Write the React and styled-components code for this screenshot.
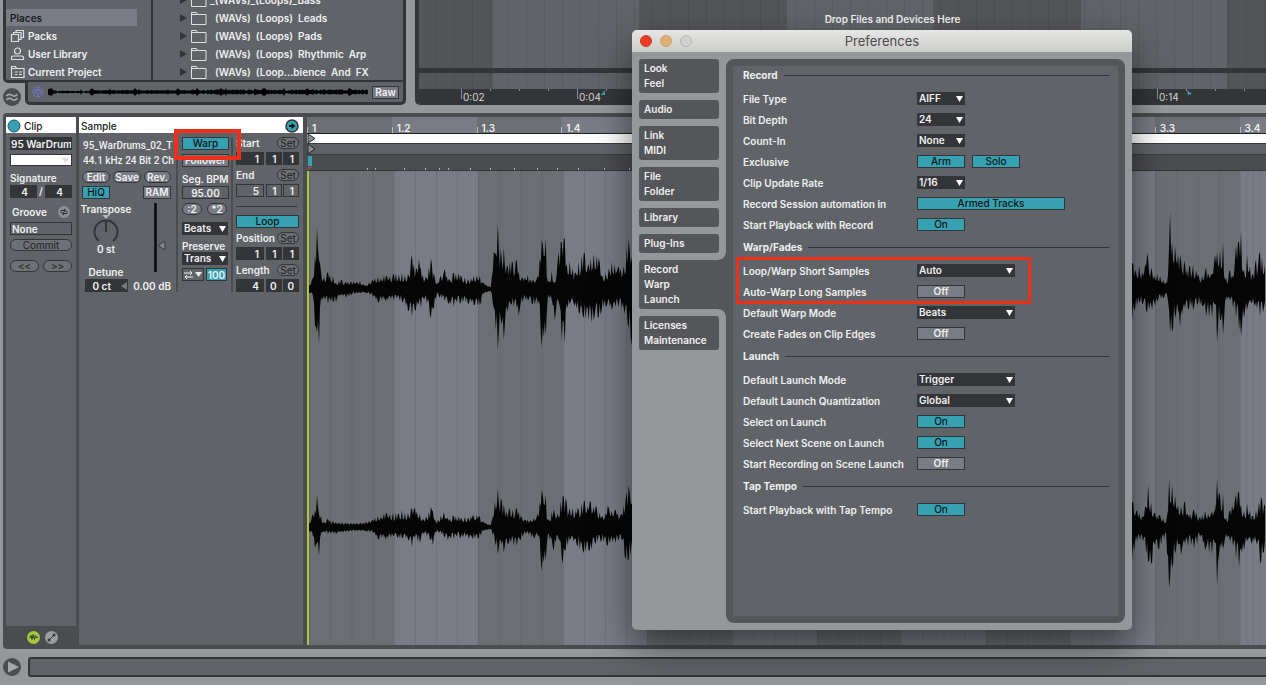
import { useState } from "react";
import styled, { createGlobalStyle, css } from "styled-components";

const TEAL = "#36a1b1";
const DARK = "#333539";
const FRAME = "#4b4c4f";
const PANEL = "#606468";
const CHROME = "#94989b";
const LIGHT = "#797c85";
const TEXT = "#f0f0f0";

const PLACES = [
  { label: "Packs", icon: "packs" },
  { label: "User Library", icon: "user" },
  { label: "Current Project", icon: "project" },
];

const FOLDERS = [
  "_(WAVs)_(Loops)_Bass",
  "(WAVs)  (Loops)  Leads",
  "(WAVs)  (Loops)  Pads",
  "(WAVs)  (Loops)  Rhythmic  Arp",
  "(WAVs)  (Loop...bience  And  FX",
];

const TIMES = ["0:02", "0:04", "0:06", "0:08", "0:10", "0:12", "0:14"];

const BEATS = ["1", "1.2", "1.3", "1.4", "2", "2.2", "2.3", "2.4", "3", "3.2", "3.3", "3.4"];

const TABS = [
  ["Look", "Feel"],
  ["Audio"],
  ["Link", "MIDI"],
  ["File", "Folder"],
  ["Library"],
  ["Plug-Ins"],
  ["Record", "Warp", "Launch"],
  ["Licenses", "Maintenance"],
];

// peaks: [x, above, below]
const LEFT_CHANNEL = [
  [0, 3, 3], [4, 10, 6], [6, 32, 36], [8, 60, 42], [10, 28, 54], [11, 24, 18], [14, 8, 8], [19, 16, 14], [24, 12, 12],
  [27, 5, 12], [32, 8, 5], [37, 6, 8], [42, 7, 5], [51, 7, 3], [57, 3, 3], [64, 8, 7], [69, 11, 12], [77, 12, 11],
  [85, 13, 10], [93, 15, 11], [99, 14, 20], [103, 33, 27], [107, 18, 20], [110, 29, 12], [112, 19, 18], [116, 8, 8],
  [122, 30, 28], [125, 15, 18], [128, 4, 4], [131, 10, 8], [136, 19, 11], [140, 9, 14], [145, 15, 17], [152, 13, 12],
  [159, 9, 13], [165, 12, 15], [171, 12, 15], [175, 5, 4], [182, 1, 1], [185, 36, 18], [187, 34, 40], [189, 65, 60],
  [192, 40, 30], [195, 40, 50], [199, 22, 22], [203, 26, 14], [208, 28, 18], [210, 16, 26], [214, 10, 12],
  [219, 13, 10], [224, 8, 14], [229, 12, 14], [233, 48, 57], [237, 50, 45], [239, 6, 8], [243, 17, 10], [246, 5, 30],
  [250, 36, 12], [253, 46, 50], [256, 50, 54], [259, 14, 18], [261, 27, 14], [266, 15, 16], [270, 26, 22],
  [275, 35, 28], [280, 24, 30], [285, 34, 30], [290, 30, 28], [293, 12, 20], [297, 15, 16], [303, 26, 20],
  [310, 22, 17], [315, 22, 18], [320, 50, 38], [323, 30, 56], [330, 44, 50], [360, 16, 18], [420, 20, 20],
  [440, 55, 48], [480, 24, 24], [540, 48, 40], [600, 18, 20], [660, 40, 42], [720, 20, 18], [790, 34, 30],
  [824, 25, 28], [827, 18, 18], [831, 22, 12], [834, 16, 14], [839, 35, 22], [844, 16, 20], [849, 14, 11],
  [855, 8, 8], [859, 5, 5], [862, 76, 43], [864, 46, 42], [867, 42, 28], [870, 34, 20], [872, 33, 37], [877, 23, 18],
  [881, 22, 18], [885, 23, 20], [890, 14, 13], [894, 12, 16], [898, 21, 27], [904, 14, 27], [907, 33, 15],
  [909, 36, 52], [912, 38, 30], [915, 46, 44], [917, 8, 12], [922, 18, 10], [925, 10, 18], [928, 42, 28],
  [931, 45, 40], [933, 57, 46], [936, 18, 28], [939, 33, 20], [944, 13, 13], [947, 24, 16], [952, 36, 26],
  [958, 20, 24],
];

const RIGHT_CHANNEL = [
  [0, 3, 3], [4, 12, 8], [6, 16, 20], [8, 31, 15], [10, 12, 28], [12, 10, 5], [14, 3, 4], [19, 7, 6], [27, 4, 6],
  [37, 3, 4], [52, 3, 3], [64, 6, 5], [69, 10, 11], [77, 13, 11], [89, 12, 10], [93, 16, 10], [99, 13, 11],
  [103, 18, 19], [106, 18, 10], [111, 12, 15], [115, 6, 6], [122, 19, 12], [124, 15, 17], [127, 4, 4], [135, 14, 8],
  [139, 8, 12], [145, 10, 11], [152, 8, 9], [164, 11, 11], [170, 10, 10], [175, 4, 3], [182, 1, 1], [186, 24, 12],
  [189, 37, 26], [193, 25, 16], [195, 22, 24], [200, 16, 15], [208, 18, 18], [212, 10, 12], [217, 6, 6],
  [225, 8, 10], [229, 12, 8], [233, 36, 43], [237, 31, 32], [239, 6, 7], [245, 17, 23], [249, 12, 8], [254, 30, 36],
  [257, 28, 22], [261, 18, 12], [269, 18, 18], [275, 24, 25], [281, 24, 22], [287, 20, 16], [293, 9, 12],
  [299, 20, 18], [307, 16, 15], [313, 12, 12], [317, 27, 31], [320, 41, 32], [324, 28, 27], [360, 16, 18],
  [440, 38, 40], [500, 16, 16], [560, 34, 30], [640, 15, 17], [700, 30, 36], [780, 16, 16], [824, 24, 31],
  [829, 16, 13], [835, 9, 13], [840, 42, 34], [843, 24, 36], [847, 13, 17], [851, 11, 22], [858, 4, 6],
  [861, 47, 60], [864, 41, 40], [867, 30, 26], [870, 21, 16], [873, 20, 27], [877, 23, 16], [880, 11, 18],
  [886, 16, 21], [892, 9, 9], [897, 15, 22], [904, 14, 26], [907, 16, 15], [909, 47, 57], [911, 33, 26],
  [915, 31, 21], [917, 6, 10], [922, 16, 13], [928, 31, 30], [931, 33, 39], [936, 15, 22], [939, 23, 13],
  [944, 10, 16], [948, 16, 13], [953, 29, 36], [956, 20, 24], [958, 22, 24],
];

function noise(n) {
  const s = Math.sin(n * 127.1) * 43758.5453;
  return s - Math.floor(s);
}

function wavePath(peaks, base) {
  const top = [];
  const bottom = [];
  for (let i = 0; i < peaks.length - 1; i++) {
    const [x0, u0, d0] = peaks[i];
    const [x1, u1, d1] = peaks[i + 1];
    for (let x = x0; x < x1; x++) {
      const t = (x - x0) / (x1 - x0);
      const ku = x === x0 ? 1 : x % 3 ? 0.4 + noise(x) * 0.3 : 0.8 + noise(x) * 0.3;
      const kd = x === x0 ? 1 : x % 3 === 1 ? 0.8 + noise(x + 9) * 0.3 : 0.4 + noise(x + 9) * 0.3;
      top.push(`${x} ${(base - 1 - (u0 + (u1 - u0) * t) * ku).toFixed(1)}`);
      bottom.push(`${x} ${(base + 1 + (d0 + (d1 - d0) * t) * kd).toFixed(1)}`);
    }
  }
  return `M${top.join("L")}L${bottom.reverse().join("L")}Z`;
}

function previewPath() {
  const top = [];
  const bottom = [];
  for (let x = 0; x <= 320; x++) {
    const hit = x % 43 < 3 || x % 29 === 4 || x < 4;
    const a = (x > 8 && x < 42 ? 0.6 : 1.2) + noise(x) * (x > 140 ? 1.6 : 1) + (hit ? 1.6 : 0);
    top.push(`${x} ${(6 - a).toFixed(1)}`);
    bottom.push(`${x} ${(6 + a).toFixed(1)}`);
  }
  return `M${top.join("L")}L${bottom.reverse().join("L")}Z`;
}

function PlaceIcon({ kind }) {
  return (
    <svg width="16" height="14" viewBox="0 0 16 14" fill="none" stroke="#e0e0e0" strokeWidth="1.2">
      {kind === "packs" && <path d="M1.5 5.5h7v7h-7zM3.5 5V3.500h7.500v7H9M6 3V1.500h7.500v7H11.500" />}
      {kind === "user" && (
        <>
          <circle cx="7.500" cy="4" r="3" />
          <path d="M1.500 12.500v-2.500l1.500-1h9l1.500 1v2.500z" />
        </>
      )}
      {kind === "project" && (
        <path d="M1.500 12.500v-11h4l1 2h7.500v9zM1.500 3.500h5M5 7h2.500M9 7h3M5 9.500h2.500M9 9.500h3" />
      )}
    </svg>
  );
}

function Dropdown({ label, value, wide, id, size = "pref" }) {
  return (
    <SelectBox $wide={wide} $size={size}>
      <Select id={id} aria-label={label} defaultValue={value}>
        <option>{value}</option>
      </Select>
      <svg width="7" height="6" viewBox="0 0 7 6" fill="#fff">
        <path d="M0 0h7L3.500 6z" />
      </svg>
    </SelectBox>
  );
}

function Switch({ on, id, width = 48 }) {
  const [active, setActive] = useState(on);
  return (
    <Toggle id={id} $on={active} $width={width} onClick={() => setActive(!active)}>
      {active ? "On" : "Off"}
    </Toggle>
  );
}

function Position({ label, values, dark }) {
  return (
    <Locator>
      <LocatorHead>
        <span>{label}</span>
        <Pill $width={22} $ink>Set</Pill>
      </LocatorHead>
      <Numbers>
        {values.map((v, i) => (
          <NumberBox key={i} $dark={dark} defaultValue={v} aria-label={`${label} ${i + 1}`} />
        ))}
      </Numbers>
    </Locator>
  );
}

function Browser() {
  return (
    <BrowserColumn>
      <BrowserPanel>
        <Places>
          <PlacesTitle>Places</PlacesTitle>
          {PLACES.map((p) => (
            <PlaceRow key={p.label} href="#">
              <PlaceIcon kind={p.icon} />
              {p.label}
            </PlaceRow>
          ))}
        </Places>
        <Folders>
          {FOLDERS.map((name, i) => (
            <FolderRow key={name} $flush={i === 0}>
              <svg width="7" height="8" viewBox="0 0 7 8" fill={DARK}>
                <path d="M0 0l7 4-7 4z" />
              </svg>
              <svg width="16" height="13" viewBox="0 0 16 13" fill="none" stroke="#e0e0e0">
                <path d="M.5 12.500v-12h5l1 2h8.500v10zM.5 2.500h6" />
              </svg>
              <span>{name}</span>
            </FolderRow>
          ))}
        </Folders>
      </BrowserPanel>
      <PreviewRow>
        <HotSwap width="18" height="18" viewBox="0 0 18 18">
          <circle cx="9" cy="9" r="9" fill={FRAME} />
          <path
            d="M3.500 8c1.800-2.500 3.500-2 5.500-.700s3.700 1.300 5.500-1M3.500 12c1.800-2.500 3.500-2 5.500-.700s3.700 1.300 5.500-1"
            fill="none"
            stroke="#a4a8ab"
            strokeWidth="1.600"
          />
        </HotSwap>
        <Preview>
          <svg width="12" height="12" viewBox="0 0 12 12" fill="none" stroke="#7674c8">
            <circle cx="6" cy="6" r="5" />
            <path d="M3.500 7.500V6a2.500 2.500 0 0 1 5 0v1.500M6 6v5" strokeWidth="1.300" />
          </svg>
          <PreviewWave viewBox="0 0 320 12" preserveAspectRatio="none">
            <path d={previewPath()} fill="#060606" />
          </PreviewWave>
          <RawButton>Raw</RawButton>
        </Preview>
      </PreviewRow>
    </BrowserColumn>
  );
}

function Arrangement() {
  return (
    <ArrangementPanel>
      <Tracks>
        <DropHint>Drop Files and Devices Here</DropHint>
      </Tracks>
      <TrackDivider />
      <TrackFoot />
      <TimeRuler>
        {TIMES.map((t) => (
          <TimeMark key={t}>
            <span>{t}</span>
            {(t === "0:04" || t === "0:14") && (
              <CueMark $far={t === "0:14"} width="5" height="5" viewBox="0 0 5 5" fill={TEAL}>
                <path d={t === "0:04" ? "M4 0v5H0z" : "M0 0l5 4-4 1z"} />
              </CueMark>
            )}
          </TimeMark>
        ))}
      </TimeRuler>
    </ArrangementPanel>
  );
}

function ClipBox() {
  return (
    <ClipColumn>
      <ClipBody>
        <BoxTitle>
          <svg width="14" height="14" viewBox="0 0 14 14">
            <circle cx="7" cy="7" r="6" fill={TEAL} stroke="#23525b" />
          </svg>
          Clip
        </BoxTitle>
        <ClipFields>
          <ClipName defaultValue="95 WarDrum" aria-label="Clip name" />
          <ColorPicker aria-label="Clip color">
            <svg width="7" height="5" viewBox="0 0 7 5" fill="#ddd">
              <path d="M0 0h7L3.500 5z" />
            </svg>
          </ColorPicker>
          <FieldLabel $gap={6}>Signature</FieldLabel>
          <SignatureRow>
            <NumberBox $dark defaultValue="4" aria-label="Beats" />
            <span>/</span>
            <NumberBox $dark defaultValue="4" aria-label="Beat unit" />
          </SignatureRow>
          <GrooveRow>
            Groove
            <svg width="12" height="12" viewBox="0 0 12 12">
              <circle cx="6" cy="6" r="6" fill="#8a8d91" />
              <path d="M3 7V4.500h4M9 5v2.500H5M6 3l2 1.500L6 6M6 6L4 7.500 6 9" fill="none" stroke={DARK} />
            </svg>
          </GrooveRow>
          <GrooveField defaultValue="None" aria-label="Groove" />
          <Pill $ink $fill>Commit</Pill>
          <NudgeRow>
            <Pill $ink>&lt;&lt;</Pill>
            <Pill $ink>&gt;&gt;</Pill>
          </NudgeRow>
        </ClipFields>
      </ClipBody>
      <ClipFoot>
        <svg width="13" height="13" viewBox="0 0 13 13">
          <circle cx="6.500" cy="6.500" r="6.500" fill="#a6c93c" />
          <path d="M2 6.500h1l1-2 1 4 1.200-5 1.300 5 1-4 1 2h1.500" fill="none" stroke={DARK} />
        </svg>
        <svg width="13" height="13" viewBox="0 0 13 13">
          <circle cx="6.500" cy="6.500" r="6.500" fill="#9b9ea2" />
          <path d="M4 9l5-5" stroke={DARK} />
          <circle cx="4" cy="9" r="1.500" fill={DARK} />
          <circle cx="9" cy="4" r="1.500" fill={DARK} />
        </svg>
      </ClipFoot>
    </ClipColumn>
  );
}

function SampleBox() {
  return (
    <SampleColumn>
      <BoxTitle $spread>
        Sample
        <svg width="14" height="14" viewBox="0 0 14 14">
          <circle cx="7" cy="7" r="6" fill={TEAL} stroke={DARK} strokeWidth="1.500" />
          <path d="M4 6h2.500V4L10.500 7 6.500 10V8H4z" fill="#111" />
        </svg>
      </BoxTitle>
      <SampleBody>
        <SampleInfo>
          <Clipped>95_WarDrums_02_T</Clipped>
          <Clipped>44.1 kHz 24 Bit 2 Ch</Clipped>
          <Spread $gap={3}>
            <Pill $width={28}>Edit</Pill>
            <Pill $width={28}>Save</Pill>
            <Pill $width={27}>Rev.</Pill>
          </Spread>
          <Spread $gap={3}>
            <Toggle $on $width={28}>HiQ</Toggle>
            <Toggle $width={28}>RAM</Toggle>
          </Spread>
          <TuneRow>
            <TuneColumn>
              <span>Transpose</span>
              <svg width="28" height="28" viewBox="0 0 28 28" fill="none">
                <path d="M7 26a11.500 11.500 0 1 1 14 0" stroke={DARK} strokeWidth="2" />
                <path d="M14 17V5" stroke={DARK} strokeWidth="2" />
                <path d="M10.500 0h7L14 4z" fill="#b8babd" />
              </svg>
              <span>0 st</span>
              <Detune>Detune</Detune>
              <DetuneBox>
                0 ct
                <svg width="6" height="8" viewBox="0 0 6 8" fill="#77797d">
                  <path d="M6 0v8L0 4z" />
                </svg>
              </DetuneBox>
            </TuneColumn>
            <GainColumn>
              <svg width="18" height="70" viewBox="0 0 18 70">
                <path d="M4.500 0v69" stroke="#0a0a0a" strokeWidth="2.500" />
                <path d="M14 38v9l-7-4.500z" fill="#85888c" stroke={DARK} />
              </svg>
              <span>0.00 dB</span>
            </GainColumn>
          </TuneRow>
        </SampleInfo>
        <WarpColumn>
          <WarpCell>
            <Toggle $on $width={47}>Warp</Toggle>
            <Highlight $kind="warp" />
          </WarpCell>
          <Toggle $width={47}>Follower</Toggle>
          <FieldLabel $gap={6}>Seg. BPM</FieldLabel>
          <BpmField defaultValue="95.00" aria-label="Segment BPM" />
          <Spread $gap={4}>
            <Pill $width={20}>:2</Pill>
            <Pill $width={20}>*2</Pill>
          </Spread>
          <WarpSelects>
            <Dropdown label="Warp mode" value="Beats" size="clip" />
            <FieldLabel $gap={5}>Preserve</FieldLabel>
            <Dropdown label="Preserve" value="Trans" size="clip" />
          </WarpSelects>
          <Spread $gap={3}>
            <LoopMode aria-label="Transient loop mode">
              <svg width="18" height="10" viewBox="0 0 18 10" fill="none" stroke="#eee">
                <path d="M0 3h8M6 1l2 2-2 2M9 7H1M3 5L1 7l2 2" />
                <path d="M11 2h7l-3.500 5z" fill="#eee" stroke="none" />
              </svg>
            </LoopMode>
            <Percent defaultValue="100" aria-label="Envelope" />
          </Spread>
        </WarpColumn>
        <RegionColumn>
          <Position label="Start" values={[1, 1, 1]} dark />
          <Position label="End" values={[5, 1, 1]} />
          <Rule />
          <LoopCell>
            <Toggle $on $width={63}>Loop</Toggle>
          </LoopCell>
          <Position label="Position" values={[1, 1, 1]} dark />
          <Position label="Length" values={[4, 0, 0]} dark />
        </RegionColumn>
      </SampleBody>
    </SampleColumn>
  );
}

function WaveView() {
  return (
    <WaveColumn>
      <BeatGrid>
        {BEATS.map((b) => (
          <BeatLabel key={b}>{b}</BeatLabel>
        ))}
      </BeatGrid>
      <LoopBar>
        <svg width="9" height="9" viewBox="0 0 9 9">
          <path d="M1 0l7 4.500-7 4.500z" fill="#8d9093" stroke="#222" />
        </svg>
      </LoopBar>
      <MarkerBar>
        <svg width="9" height="10" viewBox="0 0 9 10">
          <path d="M1 0l7 5-7 5z" fill="#8d9093" stroke="#222" />
        </svg>
      </MarkerBar>
      <WarpBar>
        <svg width="5" height="14" viewBox="0 0 5 14">
          <path d="M1 0h4v10H1z" fill={TEAL} />
          <path d="M1 11h3l-2 3z" fill="#d0402a" />
        </svg>
        <Transients>
          {[56, 8, 29, 21, 14, 9, 22, 20, 24, 23, 20, 21, 26, 25].map((w, i) => (
            <i key={i} style={{ marginLeft: w - 1 }} />
          ))}
        </Transients>
      </WarpBar>
      <WaveStage>
        <BeatGrid $tall>
          {BEATS.map((b) => (
            <BeatStripe key={b} />
          ))}
        </BeatGrid>
        <Wave viewBox="0 0 958 474" preserveAspectRatio="none">
          <path d={wavePath(LEFT_CHANNEL, 118)} />
          <path d={wavePath(RIGHT_CHANNEL, 356)} />
        </Wave>
      </WaveStage>
    </WaveColumn>
  );
}

function Section({ title, children }) {
  return (
    <PrefSection>
      <PrefHeading>{title}</PrefHeading>
      {children}
    </PrefSection>
  );
}

function Row({ label, id, children }) {
  return (
    <PrefRow>
      <label htmlFor={id}>{label}</label>
      {children}
    </PrefRow>
  );
}

function Preferences() {
  return (
    <Window role="dialog" aria-label="Preferences">
      <TitleBar>
        <Light $color="#ee3b26" $edge="#c93a28" aria-label="Close" />
        <Light $color="#dcb070" $edge="#cda265" aria-label="Minimize" />
        <Light $color="#d0d1d0" $edge="#b4b5b5" aria-label="Zoom" />
        <WindowTitle>Preferences</WindowTitle>
      </TitleBar>
      <WindowBody>
        <TabList>
          {TABS.map((lines) => (
            <Tab key={lines[0]} $active={lines[0] === "Record"}>
              {lines.map((l) => (
                <span key={l}>{l}</span>
              ))}
            </Tab>
          ))}
        </TabList>
        <Page>
          <Section title="Record">
            <Row label="File Type" id="file-type">
              <Dropdown id="file-type" value="AIFF" />
            </Row>
            <Row label="Bit Depth" id="bit-depth">
              <Dropdown id="bit-depth" value="24" />
            </Row>
            <Row label="Count-In" id="count-in">
              <Dropdown id="count-in" value="None" />
            </Row>
            <Row label="Exclusive" id="exclusive">
              <Toggle id="exclusive" $on $width={48}>Arm</Toggle>
              <Toggle $on $width={48}>Solo</Toggle>
            </Row>
            <Row label="Clip Update Rate" id="update-rate">
              <Dropdown id="update-rate" value="1/16" />
            </Row>
            <Row label="Record Session automation in" id="automation">
              <Toggle id="automation" $on $width={148}>Armed Tracks</Toggle>
            </Row>
            <Row label="Start Playback with Record" id="playback-record">
              <Switch id="playback-record" on />
            </Row>
          </Section>
          <Section title="Warp/Fades">
            <Marked>
              <Row label="Loop/Warp Short Samples" id="short-samples">
                <Dropdown id="short-samples" value="Auto" wide />
              </Row>
              <Row label="Auto-Warp Long Samples" id="long-samples">
                <Switch id="long-samples" />
              </Row>
              <Highlight $kind="rows" />
            </Marked>
            <Row label="Default Warp Mode" id="warp-mode">
              <Dropdown id="warp-mode" value="Beats" wide />
            </Row>
            <Row label="Create Fades on Clip Edges" id="fades">
              <Switch id="fades" />
            </Row>
          </Section>
          <Section title="Launch">
            <Row label="Default Launch Mode" id="launch-mode">
              <Dropdown id="launch-mode" value="Trigger" wide />
            </Row>
            <Row label="Default Launch Quantization" id="quantization">
              <Dropdown id="quantization" value="Global" wide />
            </Row>
            <Row label="Select on Launch" id="select-launch">
              <Switch id="select-launch" on />
            </Row>
            <Row label="Select Next Scene on Launch" id="next-scene">
              <Switch id="next-scene" on />
            </Row>
            <Row label="Start Recording on Scene Launch" id="record-scene">
              <Switch id="record-scene" />
            </Row>
          </Section>
          <Section title="Tap Tempo">
            <Row label="Start Playback with Tap Tempo" id="tap-tempo">
              <Switch id="tap-tempo" on />
            </Row>
          </Section>
        </Page>
      </WindowBody>
    </Window>
  );
}

function App() {
  return (
    <>
      <GlobalStyle />
      <Screen>
        <TopRow>
          <Browser />
          <Arrangement />
        </TopRow>
        <ClipView>
          <ClipBox />
          <SampleBox />
          <WaveView />
        </ClipView>
        <StatusRow>
          <PlayButton aria-label="Play">
            <svg width="18" height="18" viewBox="0 0 18 18">
              <circle cx="9" cy="9" r="9" fill={FRAME} />
              <path d="M5 3.500v11l11-5.500z" fill="#a4a8ab" />
            </svg>
          </PlayButton>
          <StatusBar />
        </StatusRow>
        <Preferences />
      </Screen>
    </>
  );
}

const GlobalStyle = createGlobalStyle`
  * {
    box-sizing: border-box;
  }
  body {
    margin: 0;
    background: ${CHROME};
    color: ${TEXT};
    font: 600 10px/12px Inter, "Liberation Sans", sans-serif;
  }
  button, input, select {
    margin: 0;
    padding: 0;
    border: 0;
    border-radius: 0;
    font: inherit;
    color: inherit;
  }
  svg {
    display: block;
    flex: none;
  }
`;

const Screen = styled.div`
  position: relative;
  display: flex;
  flex-direction: column;
  min-height: 100vh;
  overflow: hidden;
`;
const TopRow = styled.div`
  display: flex;
  gap: 9px;
  height: 105px;
  padding-left: 3px;
`;
const BrowserColumn = styled.div`
  display: flex;
  flex-direction: column;
  width: 403px;
  flex: none;
`;
const BrowserPanel = styled.div`
  display: flex;
  height: 83px;
  border: solid ${DARK};
  border-width: 0 3px 3px;
  border-bottom-left-radius: 5px;
  background: ${PANEL};
`;
const Places = styled.div`
  display: flex;
  flex-direction: column;
  justify-content: flex-end;
  width: 147px;
  border-right: 2px solid ${DARK};
  overflow: hidden;
`;
const PlacesTitle = styled.div`
  width: 131px;
  padding: 3px 4px 2px;
  background: ${LIGHT};
  color: #1d1d1f;
`;
const PlaceRow = styled.a`
  display: flex;
  align-items: center;
  gap: 2px;
  height: 18px;
  padding: 2px 0 0 4px;
  color: inherit;
  text-decoration: none;
  white-space: nowrap;
`;
const Folders = styled.div`
  display: flex;
  flex: 1;
  flex-direction: column;
  justify-content: flex-end;
  padding-left: 27px;
  overflow: hidden;
`;
const FolderRow = styled.div`
  display: flex;
  flex: none;
  align-items: center;
  height: 18px;
  padding-top: 2px;
  white-space: pre;

  svg + svg {
    margin: 0 ${(p) => (p.$flush ? 3 : 8)}px 0 4px;
  }
`;
const PreviewRow = styled.div`
  display: flex;
  align-items: center;
  gap: 4px;
  height: 22px;
`;
const HotSwap = styled.svg`
  margin-top: 5px;
`;
const Preview = styled.div`
  display: flex;
  flex: 1;
  align-items: center;
  gap: 4px;
  height: 25px;
  margin-top: -3px;
  padding: 0 4px;
  border: 3px solid ${DARK};
  border-top-width: 2px;
  border-radius: 0 0 5px 5px;
  background: ${PANEL};
`;
const PreviewWave = styled.svg`
  flex: 1;
  min-width: 0;
  height: 12px;
`;
const RawButton = styled.button`
  width: 27px;
  height: 13px;
  border: 1px solid ${DARK};
  background: ${LIGHT};
  line-height: 11px;
`;

const stripes = css`
  background-color: ${PANEL};
  background-image:
    repeating-linear-gradient(90deg, transparent 0 17px, rgba(40, 42, 46, 0.15) 17px 18px),
    repeating-linear-gradient(90deg, #545559 0 74px, ${PANEL} 74px 220px, #545559 220px 294px);
`;
const ArrangementPanel = styled.div`
  display: flex;
  flex: 1;
  flex-direction: column;
  border-left: 4px solid ${DARK};
  border-bottom-left-radius: 5px;
  overflow: hidden;
`;
const Tracks = styled.div`
  flex: 1;
  ${stripes}
`;
const DropHint = styled.p`
  margin: 13px 98px 0 0;
  padding-left: 198px;
  text-align: center;
`;
const TrackDivider = styled.div`
  height: 5px;
  background: ${DARK};
`;
const TrackFoot = styled.div`
  height: 16px;
  ${stripes}
`;
const TimeRuler = styled.div`
  display: flex;
  height: 16px;
  padding-left: 42px;
  background: ${DARK};
`;
const TimeMark = styled.div`
  display: flex;
  flex: none;
  width: 116px;
  height: 16px;
  color: #d4d4d4;
  font-weight: 400;
  background: repeating-linear-gradient(90deg, #8b8d90 0 1px, transparent 1px 29px) 0 0 / 100% 2px no-repeat;

  span {
    height: 10px;
    padding: 2px 0 0 1px;
    border-left: 1px solid #8b8d90;
  }
`;
const CueMark = styled.svg`
  margin: 1px 0 0 ${(p) => (p.$far ? 8 : 0)}px;
`;

const ClipView = styled.div`
  display: flex;
  flex: 1;
  margin: 8px 0 8px 3px;
  padding: 4px 0 4px 3px;
  border-radius: 4px 0 0 4px;
  background: ${FRAME};
`;
const ClipColumn = styled.div`
  display: flex;
  flex-direction: column;
  width: 70px;
  margin-right: 3px;
`;
const ClipBody = styled.div`
  flex: 1;
  background: ${PANEL};
`;
const BoxTitle = styled.div`
  display: flex;
  align-items: center;
  justify-content: ${(p) => (p.$spread ? "space-between" : "flex-start")};
  gap: 3px;
  height: 16px;
  padding: 1px 4px 0 ${(p) => (p.$spread ? 2 : 1)}px;
  background: #fff;
  color: #222;
  font-weight: 500;
`;
const ClipFields = styled.div`
  display: flex;
  flex-direction: column;
  padding: 4px 4px 0;
`;
const field = css`
  height: 13px;
  border: 1px solid ${DARK};
  line-height: 11px;
`;
const ClipName = styled.input`
  ${field}
  width: 100%;
  background: ${DARK};
`;
const ColorPicker = styled.button`
  display: flex;
  align-items: center;
  justify-content: flex-end;
  height: 12px;
  margin-top: 4px;
  padding-right: 2px;
  border: 1px solid ${DARK};
  background: #fff;
`;
const FieldLabel = styled.div`
  padding-top: ${(p) => p.$gap}px;
`;
const SignatureRow = styled.div`
  display: flex;
  justify-content: space-between;
  margin-top: 1px;

  input {
    width: 27px;
    padding-right: 8px;
  }
`;
const GrooveRow = styled.div`
  display: flex;
  align-items: center;
  justify-content: space-between;
  padding: 8px 2px 4px;
`;
const GrooveField = styled.input`
  ${field}
  width: 100%;
  margin-bottom: 4px;
  padding-left: 1px;
  background: ${PANEL};
`;
const Pill = styled.button`
  width: ${(p) => (p.$width ? `${p.$width}px` : "auto")};
  flex: ${(p) => (p.$width || p.$fill ? "none" : 1)};
  height: 12px;
  border: 1px solid ${DARK};
  border-radius: 6px;
  background: ${(p) => (p.$ink ? "#6d7074" : LIGHT)};
  color: ${(p) => (p.$ink ? "#1f2022" : TEXT)};
  font-weight: ${(p) => (p.$ink ? 400 : 600)};
  line-height: 10px;
  text-align: center;
`;
const NudgeRow = styled.div`
  display: flex;
  gap: 4px;
  margin-top: 9px;
`;
const ClipFoot = styled.div`
  display: flex;
  align-items: center;
  justify-content: center;
  gap: 5px;
  height: 19px;
  padding: 3px 0 0 2px;
`;

const SampleColumn = styled.div`
  width: 224px;
  margin-right: 4px;
  background: ${PANEL};
`;
const SampleBody = styled.div`
  display: flex;
  align-items: flex-start;
  padding: 4px 4px 0 3px;
`;
const SampleInfo = styled.div`
  display: flex;
  flex-direction: column;
  width: 96px;
  height: 155px;
  padding: 1px 5px 0 0;
  border-right: 2px solid ${FRAME};
`;
const Clipped = styled.div`
  height: 15px;
  margin-right: -4px;
  padding-left: 1px;
  font-family: Roboto, Inter, sans-serif;
  font-weight: 500;
  line-height: 15px;
  white-space: nowrap;
  overflow: hidden;
`;
const Spread = styled.div`
  display: flex;
  justify-content: space-between;
  padding-top: ${(p) => p.$gap}px;
`;
const TuneRow = styled.div`
  display: flex;
  justify-content: space-between;
  padding-top: 4px;
`;
const TuneColumn = styled.div`
  display: flex;
  flex-direction: column;
  align-items: center;
  width: 48px;
`;
const Detune = styled.span`
  padding-top: 11px;
`;
const DetuneBox = styled.div`
  display: flex;
  align-items: center;
  justify-content: space-between;
  width: 43px;
  height: 13px;
  margin-top: 1px;
  padding: 0 1px 0 8px;
  background: ${DARK};
`;
const GainColumn = styled.div`
  display: flex;
  flex-direction: column;
  align-items: flex-end;
  justify-content: space-between;
  white-space: nowrap;

  svg {
    margin-right: 2px;
  }
`;
const Toggle = styled.button`
  width: ${(p) => p.$width}px;
  height: 13px;
  border: 1px solid ${DARK};
  background: ${(p) => (p.$on ? TEAL : LIGHT)};
  color: ${(p) => (p.$on ? "#101416" : TEXT)};
  font-weight: ${(p) => (p.$on ? 500 : 600)};
  line-height: 11px;
  text-align: center;
`;
const WarpColumn = styled.div`
  display: flex;
  flex-direction: column;
  width: 55px;
  height: 155px;
  padding: 0 4px;
  border-right: 2px solid ${FRAME};
  white-space: nowrap;
`;
const WarpCell = styled.div`
  position: relative;
  z-index: 1;
  margin-bottom: 4px;
`;
const Highlight = styled.div`
  position: absolute;
  inset: ${(p) => (p.$kind === "warp" ? "-8px -14px -10px -8px" : "-3px 78px -2px -7px")};
  border: solid #ee2f1a;
  border-width: ${(p) => (p.$kind === "warp" ? 4 : 3)}px;
  pointer-events: none;
`;
const BpmField = styled.input`
  ${field}
  width: 47px;
  margin-top: 1px;
  background: ${PANEL};
  text-align: center;
`;
const WarpSelects = styled.div`
  display: flex;
  flex-direction: column;
  padding-top: 7px;
`;
const LoopMode = styled.button`
  display: grid;
  place-items: center;
  width: 22px;
  height: 13px;
  border: 1px solid ${DARK};
  background: ${PANEL};
`;
const Percent = styled.input`
  ${field}
  width: 21px;
  background: ${TEAL};
  text-align: center;
`;
const RegionColumn = styled.div`
  display: flex;
  flex: 1;
  flex-direction: column;
  padding-left: 3px;
`;
const Locator = styled.div`
  display: flex;
  flex-direction: column;
  gap: 3px;
  margin-bottom: 4px;
`;
const LocatorHead = styled.div`
  display: flex;
  justify-content: space-between;
`;
const Numbers = styled.div`
  display: grid;
  grid-template-columns: 28px 16px 16px;
  justify-content: space-between;
`;
const NumberBox = styled.input`
  ${field}
  width: 100%;
  padding-right: 4px;
  background: ${(p) => (p.$dark ? DARK : PANEL)};
  text-align: right;
`;
const Rule = styled.div`
  height: 1px;
  margin: 5px 2px 8px 0;
  background: ${DARK};
`;
const LoopCell = styled.div`
  display: flex;
  margin-bottom: 4px;
`;

const WaveColumn = styled.div`
  display: flex;
  flex: 1;
  flex-direction: column;
  min-width: 0;
`;
const BeatGrid = styled.div`
  display: grid;
  grid-template-columns: repeat(11, 16fr) 5fr;
  height: ${(p) => (p.$tall ? "auto" : "16px")};
`;
const BeatLabel = styled.div`
  min-width: 0;
  padding: 5px 0 0 5px;
  background:
    linear-gradient(#b8babd, #b8babd) 0 10px / 1px 6px no-repeat,
    ${PANEL};
  overflow: hidden;

  &:nth-child(odd) {
    background-color: #6b6f73;
  }
  &:nth-child(even) {
    background-color: ${LIGHT};
  }
`;
const BeatStripe = styled.div`
  background: linear-gradient(90deg, rgba(50, 52, 56, 0.14) 0 1px, transparent 1px) 0 0 / 25% 100%;

  &:nth-child(odd) {
    background-color: #6b6f73;
  }
  &:nth-child(even) {
    background-color: ${LIGHT};
  }
`;
const LoopBar = styled.div`
  height: 10px;
  border-top: 1px solid #222;
  background: #fff;
`;
const MarkerBar = styled.div`
  height: 12px;
  border: solid #3a3b3e;
  border-width: 1px 0;
  background: ${PANEL};
`;
const WarpBar = styled.div`
  display: flex;
  height: 16px;
  padding-top: 1px;
  border-bottom: 1px solid ${DARK};
  background: ${FRAME};
`;
const Transients = styled.div`
  display: flex;
  align-items: flex-end;

  i {
    width: 1px;
    height: 2px;
    background: #b0b2b5;
  }
`;
const WaveStage = styled.div`
  display: grid;
  flex: 1;
  border-left: 2px solid #a6c93c;

  > * {
    grid-area: 1 / 1;
  }
`;
const Wave = styled.svg`
  width: 100%;
  height: 100%;
  fill: #050505;
`;

const StatusRow = styled.div`
  display: flex;
  align-items: center;
  gap: 7px;
  height: 20px;
  margin-bottom: 8px;
  padding-left: 3px;
`;
const PlayButton = styled.button`
  background: none;
`;
const StatusBar = styled.div`
  flex: 1;
  height: 20px;
  border: 2px solid ${DARK};
  border-right: 0;
  border-radius: 3px 0 0 3px;
  background: ${PANEL};
`;

const Window = styled.div`
  position: absolute;
  top: 30px;
  left: 632px;
  display: flex;
  flex-direction: column;
  width: 500px;
  height: 600px;
  border-radius: 5px;
  background: ${CHROME};
  box-shadow: 0 16px 36px rgba(0, 0, 0, 0.5);
  overflow: clip;
`;
const TitleBar = styled.div`
  display: flex;
  align-items: center;
  gap: 8px;
  height: 22px;
  padding: 0 8px;
  background: linear-gradient(#e6e7e4, #cdcecb);
`;
const Light = styled.button`
  width: 12px;
  height: 12px;
  border: 1px solid ${(p) => p.$edge};
  border-radius: 50%;
  background: ${(p) => p.$color};
`;
const WindowTitle = styled.h1`
  flex: 1;
  margin: 0;
  padding-right: 60px;
  color: #4a4a4c;
  font-size: 13px;
  font-weight: 400;
  line-height: 22px;
  text-align: center;
`;
const WindowBody = styled.div`
  display: flex;
  flex: 1;
  padding: 7px;
`;
const TabList = styled.div`
  display: flex;
  flex-direction: column;
  gap: 7px;
  width: 87px;
`;
const Tab = styled.button`
  position: relative;
  display: flex;
  flex: none;
  flex-direction: column;
  width: ${(p) => (p.$active ? 87 : 80)}px;
  padding: 2px 5px;
  border-radius: ${(p) => (p.$active ? "3px 0 0 3px" : "3px")};
  background: #55565a;
  line-height: 15px;
  text-align: left;

  ${(p) =>
    p.$active &&
    css`
      &::before,
      &::after {
        content: "";
        position: absolute;
        right: 0;
        width: 7px;
        height: 7px;
      }
      &::before {
        bottom: 100%;
        background: radial-gradient(circle at 0 0, transparent 6px, #55565a 7px);
      }
      &::after {
        top: 100%;
        background: radial-gradient(circle at 0 100%, transparent 6px, #55565a 7px);
      }
    `}
`;
const Page = styled.div`
  flex: 1;
  padding: 0 9px 0 10px;
  border: 7px solid #55565a;
  border-radius: 8px;
  background: ${PANEL};
`;
const PrefSection = styled.section`
  & + & {
    margin-top: 3px;
  }
`;
const PrefHeading = styled.h2`
  display: flex;
  align-items: center;
  gap: 6px;
  height: 18px;
  margin: 0 0 4px;
  font-size: 10px;
  font-weight: 700;

  &::after {
    content: "";
    flex: 1;
    height: 1px;
    background: ${DARK};
  }
`;
const PrefRow = styled.div`
  display: flex;
  align-items: center;
  gap: 7px;
  height: 21px;

  label {
    width: 167px;
    white-space: nowrap;
  }
`;
const Marked = styled.div`
  position: relative;
`;
const SelectBox = styled.div`
  display: grid;
  align-items: center;
  width: ${(p) => (p.$size === "clip" ? 46 : p.$wide ? 98 : 48)}px;
  height: 13px;
  background: ${DARK};

  > * {
    grid-area: 1 / 1;
  }
  svg {
    justify-self: end;
    margin-right: 2px;
    pointer-events: none;
  }
`;
const Select = styled.select`
  width: 100%;
  height: 13px;
  padding-left: 2px;
  background: transparent;
  line-height: 13px;
  appearance: none;
`;

export default App;
